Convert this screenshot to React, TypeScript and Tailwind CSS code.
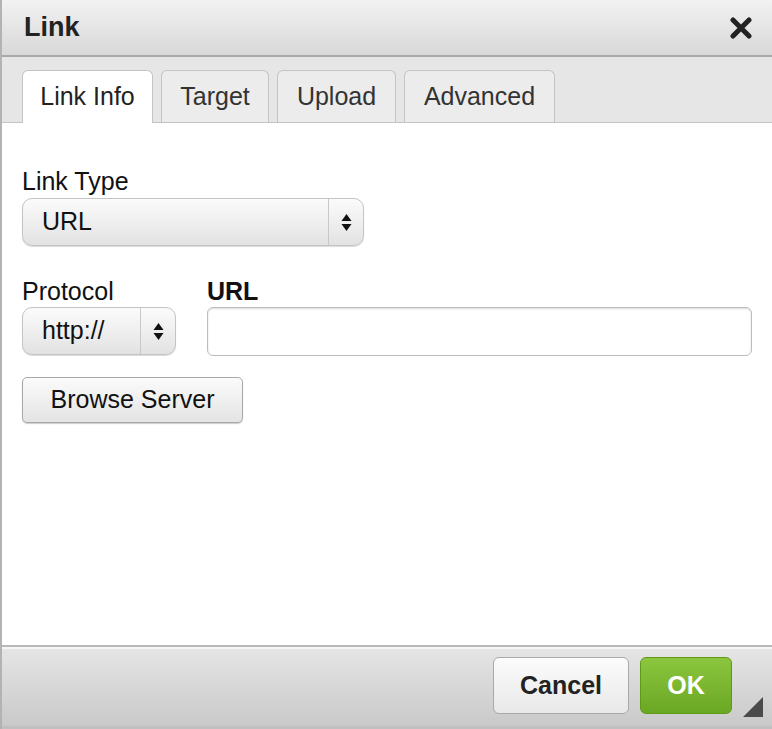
import React from "react";

function Arrows() {
  return (
    <svg width="11" height="19" viewBox="0 0 11 19">
      <path d="M5.5 1 L10.5 8 L0.5 8 Z" fill="#111" />
      <path d="M5.5 18 L10.5 11 L0.5 11 Z" fill="#111" />
    </svg>
  );
}

function Select({ value, width }: { value: string; width: string }) {
  return (
    <div
      className={`${width} h-[48px] flex rounded-[10px] border border-[#c4c4c4] bg-gradient-to-b from-[#fbfbfb] via-[#efefef] to-[#e2e2e2] shadow-[0_1px_1px_rgba(0,0,0,0.15)]`}
    >
      <div className="flex-1 flex items-center pl-[19px] text-[25px] text-[#111]">{value}</div>
      <div className="w-[35px] border-l border-[#c8c8c8] flex items-center justify-center">
        <Arrows />
      </div>
    </div>
  );
}

function Tab({ text, width, active }: { text: string; width: string; active?: boolean }) {
  return (
    <div
      className={
        active
          ? `${width} h-[53px] -mb-px flex items-center justify-center rounded-t-[6px] border border-b-0 border-[#c4c4c4] bg-white text-[25px] text-[#222]`
          : `${width} h-[52px] flex items-center justify-center rounded-t-[6px] border border-b-0 border-[#c4c4c4] bg-[#ececec] text-[25px] text-[#333]`
      }
    >
      {text}
    </div>
  );
}

export default function App() {
  return (
    <div
      className="w-[772px] h-[729px] flex flex-col border-l-2 border-[#b3b3b3] bg-white relative"
      style={{ fontFamily: '"Liberation Sans", Arial, sans-serif' }}
    >
      {/* title */}
      <div className="h-[57px] flex items-center justify-between pl-[22px] pr-[20px] bg-gradient-to-b from-[#f2f2f2] to-[#d8d8d8] border-b-2 border-[#a9a9a9]">
        <h1 className="text-[27px] font-bold text-[#222]">Link</h1>
        <svg width="22" height="22" viewBox="0 0 22 22">
          <path d="M3 3 L19 19 M19 3 L3 19" stroke="#222" strokeWidth="5" strokeLinecap="round" />
        </svg>
      </div>

      {/* tabs */}
      <div className="h-[66px] flex items-end gap-[8px] pl-[20px] bg-[#e6e6e6] border-b border-[#c4c4c4]">
        <Tab text="Link Info" width="w-[131px]" active />
        <Tab text="Target" width="w-[108px]" />
        <Tab text="Upload" width="w-[119px]" />
        <Tab text="Advanced" width="w-[151px]" />
      </div>

      {/* body */}
      <div className="flex-1 flex flex-col px-[20px] pt-[44px] text-[#111]">
        <label className="text-[25px] leading-[29px]">Link Type</label>
        <div className="mt-[2px]">
          <Select value="URL" width="w-[342px]" />
        </div>
        <div className="mt-[31px] flex gap-[31px]">
          <div className="flex flex-col">
            <label className="text-[25px] leading-[29px]">Protocol</label>
            <div className="mt-[1px]">
              <Select value="http://" width="w-[154px]" />
            </div>
          </div>
          <div className="flex flex-col flex-1">
            <label className="text-[25px] leading-[29px] font-bold">URL</label>
            <div className="mt-[1px] h-[49px] w-[545px] rounded-[6px] border border-[#bdbdbd] bg-white shadow-[inset_0_1px_2px_rgba(0,0,0,0.15)]"></div>
          </div>
        </div>
        <div className="mt-[21px]">
          <button className="h-[46px] w-[221px] rounded-[5px] border border-[#a8a8a8] bg-gradient-to-b from-[#fbfbfb] to-[#e4e4e4] text-[25px] text-[#111] shadow-[0_1px_1px_rgba(0,0,0,0.2)]">
            Browse Server
          </button>
        </div>
      </div>

      {/* footer */}
      <div className="h-[84px] flex items-start justify-end gap-[11px] pr-[40px] pt-[10px] border-t-2 border-[#b9b9b9] bg-gradient-to-b from-[#e6e6e6] to-[#c9c9c9] shadow-[inset_0_2px_0_#f7f7f7] border-b-[3px] border-b-[#c0c0c0]">
        <button className="w-[136px] h-[57px] rounded-[6px] border border-[#a9a9a9] bg-gradient-to-b from-[#fcfcfc] to-[#e8e8e8] text-[25px] font-bold text-[#222]">
          Cancel
        </button>
        <button className="w-[92px] h-[57px] rounded-[6px] border border-[#5e9a1a] bg-gradient-to-b from-[#8cc63f] to-[#6aa722] text-[25px] font-bold text-white">
          OK
        </button>
      </div>
      <svg className="absolute right-[9px] bottom-[12px]" width="20" height="20" viewBox="0 0 20 20">
        <path d="M20 0 L20 20 L0 20 Z" fill="#4a4a4a" />
      </svg>
    </div>
  );
}
